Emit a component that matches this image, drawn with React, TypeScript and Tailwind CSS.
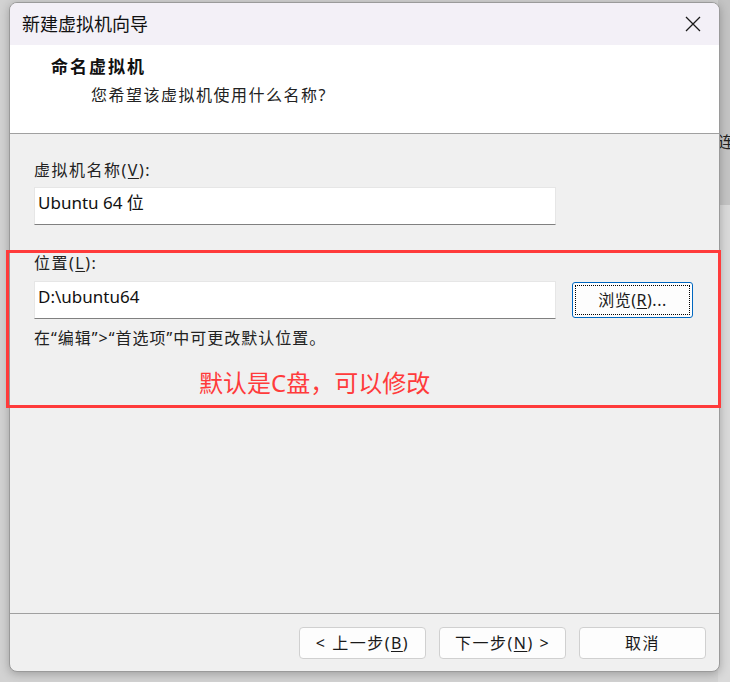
const cjk = "font-['Noto_Sans','Noto_Sans_CJK_SC',sans-serif]"

function Underlined({ ch }: { ch: string }) {
  return <span className="underline underline-offset-2 decoration-1">{ch}</span>
}

function FooterButton({ children }: { children: React.ReactNode }) {
  return (
    <button className="flex h-[32px] w-[127px] items-center justify-center rounded-[4px] border border-[#d0d0d0] bg-[#fdfdfd] text-[16px] tracking-[1.5px] text-[#1a1a1a]">
      {children}
    </button>
  )
}

export default function App() {
  return (
    <div className={`relative h-[682px] w-[730px] overflow-hidden bg-[#d2d2d2] ${cjk}`}>
      {/* window behind the dialog, right edge */}
      <div className="absolute right-0 top-0 flex h-full w-[12px] flex-col">
        <div className="h-[205px] bg-[#c4c4c4] pt-[134px] text-[16px] leading-none text-[#222]">连</div>
        <div className="flex-1 bg-[#dadada]" />
      </div>

      {/* dialog */}
      <div className="absolute left-[9px] top-[2px] flex h-[670px] w-[711px] flex-col overflow-hidden rounded-[8px] border border-[#9a9a9a] bg-[#f0f0f0] shadow-[0_2px_10px_rgba(0,0,0,0.25)]">
        <div className="flex h-[42px] shrink-0 items-center justify-between bg-[#f3f0f7] pl-[12px] pr-[14px]">
          <span className="text-[18px] text-[#111]">新建虚拟机向导</span>
          <svg width="18" height="18" viewBox="0 0 18 18" className="mr-[3px]">
            <path d="M2 2L16 16M16 2L2 16" stroke="#1a1a1a" strokeWidth="1.3" />
          </svg>
        </div>

        <div className="h-[89px] shrink-0 border-b border-[#a0a0a0] bg-white pl-[41px] pt-[11px]">
          <div className="text-[17px] font-bold leading-[22px] tracking-[2px] text-[#111]">命名虚拟机</div>
          <div className="ml-[40px] mt-[6px] text-[16px] leading-[22px] tracking-[1.5px] text-[#222]">您希望该虚拟机使用什么名称?</div>
        </div>

        <div className="flex flex-1 flex-col border-b border-[#a0a0a0] pl-[24px] pt-[25px]">
          <div className="text-[16px] leading-[22px] tracking-[1.5px] text-[#222]">
            虚拟机名称(<Underlined ch="V" />):
          </div>
          <div className="mt-[6px] flex h-[38px] w-[522px] items-start border border-b-[#808080] border-[#e6e6e6] bg-white pl-[3px] pt-[2px] text-[17px] leading-[26px] text-[#111]">
            Ubuntu 64 位
          </div>

          <div className="mt-[27px] text-[16px] leading-[22px] tracking-[1.5px] text-[#222]">
            位置(<Underlined ch="L" />):
          </div>
          <div className="mt-[7px] flex items-center gap-[16px]">
            <div className="flex h-[38px] w-[522px] items-start border border-b-[#808080] border-[#e6e6e6] bg-white pl-[3px] pt-[2px] text-[17px] leading-[26px] text-[#111]">
              D:\ubuntu64
            </div>
            <button className="flex h-[36px] w-[121px] items-center justify-center rounded-[3px] border border-[#0067c0] bg-[#fdfdfd] p-[2px]">
              <span className="flex h-full w-full items-center justify-center border border-dotted border-black text-[16px] tracking-[0.5px] text-[#1a1a1a]">
                浏览(<Underlined ch="R" />)...
              </span>
            </button>
          </div>
          <div className="mt-[8px] text-[16px] leading-[22px] tracking-[1px] text-[#222]">在“编辑”&gt;“首选项”中可更改默认位置。</div>
          <div className="ml-[165px] mt-[19px] text-[24px] leading-[30px] text-[#ff3b3b]">默认是C盘，可以修改</div>
        </div>

        <div className="flex h-[57px] shrink-0 items-start justify-end gap-[13px] pr-[13px] pt-[13px]">
          <FooterButton>
            &lt; 上一步(<Underlined ch="B" />)
          </FooterButton>
          <FooterButton>
            下一步(<Underlined ch="N" />) &gt;
          </FooterButton>
          <FooterButton>取消</FooterButton>
        </div>
      </div>

      {/* red annotation frame */}
      <div className="pointer-events-none absolute left-[6px] top-[250px] h-[158px] w-[715px] border-[3px] border-[#ff3b3b]" />
    </div>
  )
}
